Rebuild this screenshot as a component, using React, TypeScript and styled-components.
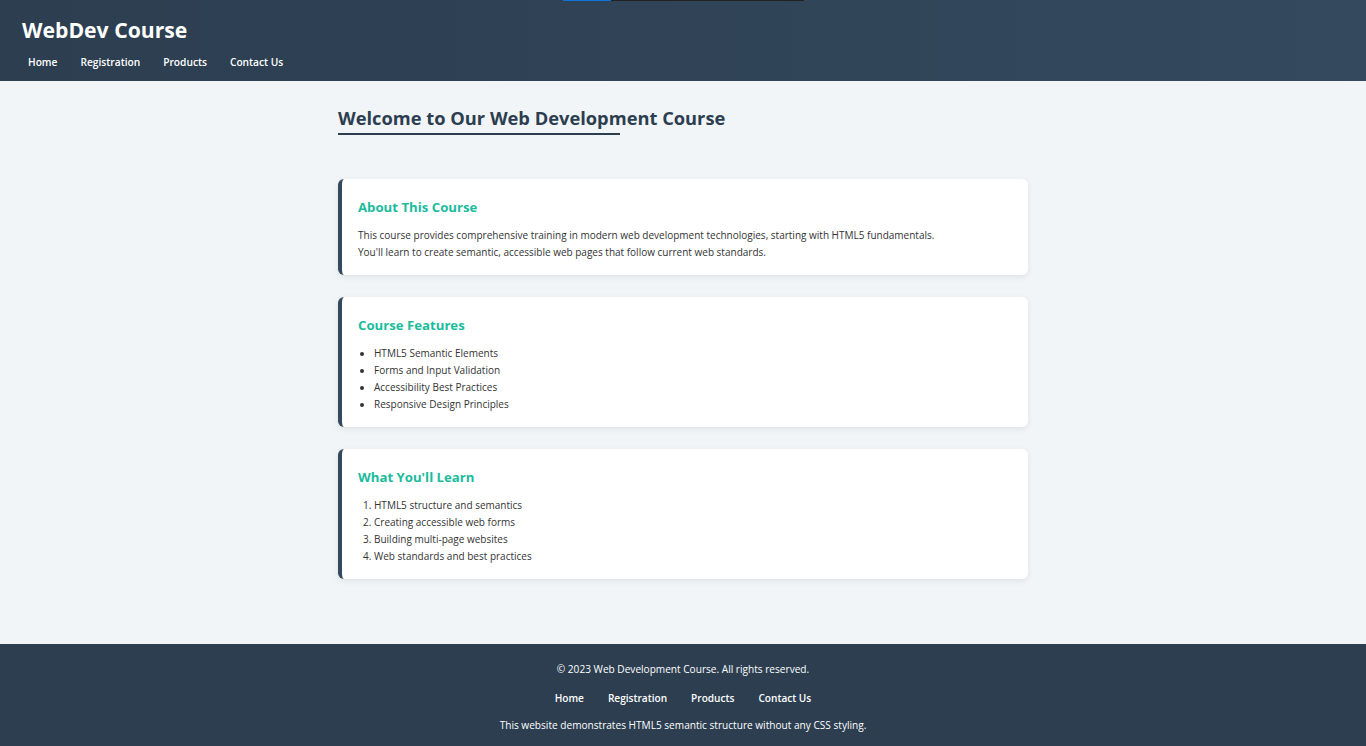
import React from "react";
import styled, { createGlobalStyle } from "styled-components";

const Global = createGlobalStyle`
  html, body { margin: 0; padding: 0; }
  body {
    font-family: "Open Sans", "Noto Sans", sans-serif;
    background: #f1f5f8;
    color: #333;
  }
`;

const Page = styled.div`
  min-height: 746px;
  display: flex;
  flex-direction: column;
  position: relative;
`;

const LoadBar = styled.div`
  position: absolute;
  top: 0;
  left: 563px;
  width: 241px;
  height: 1px;
  display: flex;
  background: #222;
`;

const LoadFill = styled.div`
  width: 48px;
  background: #0a74da;
`;

const Header = styled.header`
  height: 81px;
  box-sizing: border-box;
  background: linear-gradient(90deg, #2c3e50, #34495e);
  padding: 15px 22px 0;
  color: #fff;
`;

const SiteTitle = styled.h1`
  margin: 0;
  font-size: 21.2px;
  line-height: 29px;
  font-weight: 700;
`;

const Nav = styled.nav`
  display: flex;
  gap: 23px;
  margin-top: 5px;
  padding-left: 6px;
`;

const NavLink = styled.a`
  color: #fff;
  font-size: 10.2px;
  font-weight: 600;
  line-height: 26px;
  text-decoration: none;
`;

const Main = styled.main`
  flex: 1;
  width: 690px;
  margin: 0 auto;
  padding: 24px 0 43px;
`;

const PageTitle = styled.h2`
  position: relative;
  margin: 0 0 46px;
  font-size: 18.3px;
  line-height: 25px;
  font-weight: 700;
  color: #2c3e50;
  padding-bottom: 3px;
  &::after {
    content: "";
    position: absolute;
    left: 0;
    bottom: -2px;
    width: 282px;
    height: 2px;
    background: #2c3e50;
  }
`;

const Card = styled.section`
  background: #fff;
  border-left: 4px solid #34495e;
  border-radius: 6px;
  box-shadow: 0 2px 6px rgba(0, 0, 0, 0.08);
  padding: 19px 16px 14px;
  margin-bottom: 22px;
`;

const CardTitle = styled.h3`
  margin: 0 0 11px;
  font-size: 13.2px;
  line-height: 18px;
  font-weight: 700;
  color: #1abc9c;
`;

const Para = styled.p`
  margin: 0;
  font-size: 10px;
  line-height: 17px;
  color: #333;
`;

const List = styled.ul<{ $ordered?: boolean }>`
  margin: 0;
  padding-left: 16px;
  list-style: ${(p) => (p.$ordered ? "decimal" : "disc")};
  font-size: 10px;
  line-height: 17px;
  color: #333;
`;

const Footer = styled.footer`
  background: #2c3e50;
  color: #fff;
  text-align: center;
  padding: 15px 0 12px;
  font-size: 10.1px;
`;

const FootLine = styled.p`
  margin: 0;
  line-height: 20px;
`;

const FootNav = styled.nav`
  display: flex;
  justify-content: center;
  gap: 24px;
  margin: 9px 0 7px;
`;

const FootLink = styled.a`
  color: #fff;
  font-weight: 600;
  text-decoration: none;
  line-height: 20px;
`;

const links = ["Home", "Registration", "Products", "Contact Us"];

export default function App() {
  return (
    <Page>
      <Global />
      <LoadBar>
        <LoadFill />
      </LoadBar>
      <Header>
        <SiteTitle>WebDev Course</SiteTitle>
        <Nav>
          {links.map((l) => (
            <NavLink key={l} href="#">
              {l}
            </NavLink>
          ))}
        </Nav>
      </Header>
      <Main>
        <PageTitle>Welcome to Our Web Development Course</PageTitle>
        <Card>
          <CardTitle>About This Course</CardTitle>
          <Para>
            This course provides comprehensive training in modern web development technologies, starting with HTML5
            fundamentals.
            <br />
            You'll learn to create semantic, accessible web pages that follow current web standards.
          </Para>
        </Card>
        <Card>
          <CardTitle>Course Features</CardTitle>
          <List>
            <li>HTML5 Semantic Elements</li>
            <li>Forms and Input Validation</li>
            <li>Accessibility Best Practices</li>
            <li>Responsive Design Principles</li>
          </List>
        </Card>
        <Card>
          <CardTitle>What You'll Learn</CardTitle>
          <List as="ol" $ordered>
            <li>HTML5 structure and semantics</li>
            <li>Creating accessible web forms</li>
            <li>Building multi-page websites</li>
            <li>Web standards and best practices</li>
          </List>
        </Card>
      </Main>
      <Footer>
        <FootLine>© 2023 Web Development Course. All rights reserved.</FootLine>
        <FootNav>
          {links.map((l) => (
            <FootLink key={l} href="#">
              {l}
            </FootLink>
          ))}
        </FootNav>
        <FootLine>This website demonstrates HTML5 semantic structure without any CSS styling.</FootLine>
      </Footer>
    </Page>
  );
}
